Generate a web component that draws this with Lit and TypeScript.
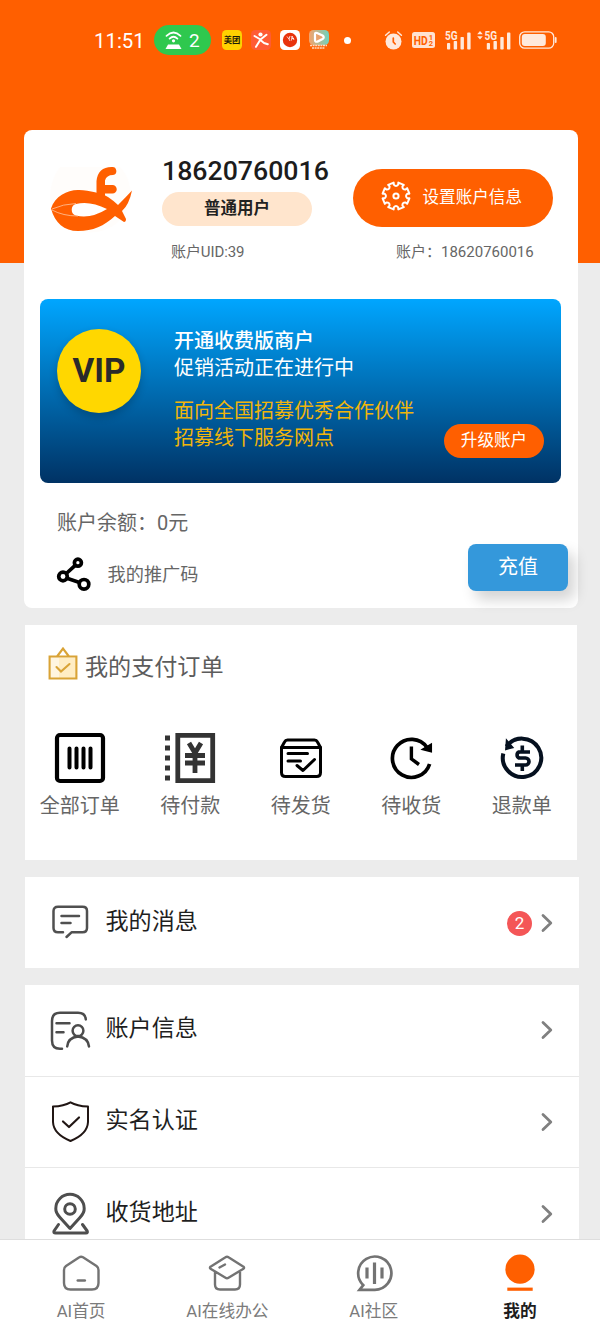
import { LitElement, html, css, svg } from "lit";
import { customElement, property } from "lit/decorators.js";

const baseFont = css`
  :host {
    font-family: Roboto, "Noto Sans CJK SC", sans-serif;
  }
  svg {
    display: block;
    flex: none;
    overflow: visible;
  }
`;

@customElement("status-bar")
class StatusBar extends LitElement {
  static styles = [
    baseFont,
    css`
      :host {
        display: flex;
        align-items: center;
        height: 80px;
        padding-left: 94px;
        box-sizing: border-box;
        color: #fff;
      }
      .time {
        width: 60px;
        font-size: 20.4px;
        line-height: 24px;
        padding-top: 1px;
        white-space: nowrap;
      }
      .hotspot {
        display: flex;
        align-items: center;
        gap: 7px;
        box-sizing: border-box;
        width: 57px;
        height: 30px;
        padding-left: 11px;
        border-radius: 15px;
        background: #2fc84e;
        font-size: 19px;
        margin-right: 11px;
      }
      .apps {
        display: flex;
        gap: 9px;
        align-items: center;
      }
      .dot {
        width: 7px;
        height: 7px;
        border-radius: 50%;
        background: #fff;
        margin: 0 34px 0 15px;
      }
      .system {
        display: flex;
        align-items: center;
      }
      .alarm { margin-right: 10px; }
      .hd { margin-right: 10px; }
      .sig { margin-right: 6px; }
      .sig2 { margin-right: 8px; }
    `,
  ];

  render() {
    const bars = (x: number) => svg`
      <rect x=${x} y="14" width="3.2" height="6.5" rx=".8"/>
      <rect x=${x + 6.7} y="12" width="3.4" height="8.5" rx=".8"/>
      <rect x=${x + 13.5} y="8" width="3.4" height="12.5" rx=".8"/>
      <rect x=${x + 20.2} y="3.6" width="3.4" height="16.9" rx=".8"/>`;
    return html`
      <span class="time">11:51</span>
      <span class="hotspot">
        <svg width="17" height="19" viewBox="0 0 17 19">
          <path d="M1.500 4.800Q8.500-1.800 15.500 4.800M4.600 7.600Q8.500 4 12.400 7.600" fill="none" stroke="#fff" stroke-width="1.8" stroke-linecap="round"/>
          <circle cx="8.500" cy="9.800" r="1.600" fill="#fff"/>
          <path d="M3 13.500H14L16.500 18H.5Z" fill="#fff"/>
        </svg>
        <span>2</span>
      </span>
      <span class="apps">
        <svg width="20" height="20" viewBox="0 0 20 20">
          <rect width="20" height="20" rx="4.500" fill="#ffd100"/>
          <text x="10" y="13.200" text-anchor="middle" font-size="8.300" font-weight="700" fill="#1d1a08">美团</text>
        </svg>
        <svg width="20" height="20" viewBox="0 0 20 20">
          <rect width="20" height="20" rx="4.500" fill="#ff5b35"/>
          <circle cx="9.500" cy="4.500" r="2.100" fill="#fff"/>
          <path d="M3.500 6 9.500 9.500 15.500 4.800M9.500 9.500 5 16.800M10 10.500 13 13 16.800 14.200" fill="none" stroke="#fff" stroke-width="2" stroke-linecap="round" stroke-linejoin="round"/>
        </svg>
        <svg width="20" height="20" viewBox="0 0 20 20">
          <rect width="20" height="20" rx="4.500" fill="#fff"/>
          <circle cx="10" cy="10" r="7.200" fill="#e8330c"/>
          <path d="M7 6.500 9 9M10 6 9 9M9 9 10 11M12 6 11.500 10.500M12 6 14 10M12 8.500H14" fill="none" stroke="#fff" stroke-width=".8"/>
        </svg>
        <svg width="20" height="20" viewBox="0 0 20 20">
          <defs>
            <linearGradient id="play" x1="0" x2="1"><stop stop-color="#f6a26a"/><stop offset="1" stop-color="#6fd3be"/></linearGradient>
          </defs>
          <rect width="20" height="15" rx="4.500" fill="url(#play)"/>
          <path d="M6 4.200Q6 2.200 8 3L13.500 5.500Q16 7.200 13.500 9L8.500 11.600Q6 12.300 6 10Z" fill="#e8a26c" stroke="#fff" stroke-width="2.200"/>
          <path d="M1 15.500H18M3 18H16" stroke="#ffd9c0" stroke-width="1.700" stroke-dasharray="2 .6"/>
        </svg>
      </span>
      <span class="dot"></span>
      <span class="system">
        <svg class="alarm" width="17" height="19" viewBox="0 0 17 19">
          <circle cx="8.500" cy="10.500" r="8" fill="#ffe9dc"/>
          <path d="M.6 4.200 4.300 1M16.400 4.200 12.700 1" stroke="#ffe9dc" stroke-width="1.500" stroke-linecap="round"/>
          <path d="M8.300 7V11L10.200 13" fill="none" stroke="#ff5f00" stroke-width="1.700" stroke-linecap="round"/>
        </svg>
        <svg class="hd" width="23" height="16" viewBox="0 0 23 16">
          <rect width="23" height="16" rx="2.500" fill="#ffe3d2"/>
          <text x="1.800" y="12.600" font-size="12.500" font-weight="700" fill="#ff5f00" textLength="14" lengthAdjust="spacingAndGlyphs">HD</text>
          <text x="16.800" y="7.500" font-size="7.600" font-weight="700" fill="#ff5f00">1</text>
          <text x="16.800" y="14.400" font-size="7.600" font-weight="700" fill="#ff5f00">2</text>
        </svg>
        <svg class="sig" width="26" height="22" viewBox="0 0 26 22" fill="#ffe9dc">
          <text x="0" y="11" font-size="12.300" font-weight="700" textLength="12.600" lengthAdjust="spacingAndGlyphs">5G</text>
          ${bars(2)}
        </svg>
        <svg class="sig2" width="34" height="22" viewBox="0 0 34 22" fill="#ffe9dc">
          <path d="M.2 5.200 3 2 5.800 5.200ZM.2 7.200H5.800L3 10.400Z"/>
          <text x="7.500" y="11" font-size="12.300" font-weight="700" textLength="12.600" lengthAdjust="spacingAndGlyphs">5G</text>
          ${bars(9.800)}
        </svg>
        <svg width="38" height="18" viewBox="0 0 38 18">
          <rect x=".7" y=".8" width="34" height="16.400" rx="5" fill="none" stroke="#ffe9dc" stroke-width="1.300"/>
          <rect x="2.800" y="3" width="24" height="12" rx="3" fill="#ffe9dc"/>
          <rect x="35.800" y="6" width="1.800" height="6" rx=".9" fill="#ffe9dc"/>
        </svg>
      </span>
    `;
  }
}

const GEAR = (() => {
  const at = (a: number, r: number) =>
    `${(15 + r * Math.cos(a)).toFixed(2)} ${(15 + r * Math.sin(a)).toFixed(2)}`;
  let d = "";
  const teeth = 8;
  for (let i = 0; i < teeth; i++) {
    const a = (i * 2 * Math.PI) / teeth + Math.PI / 8;
    d += `${i ? "L" : "M"}${at(a - 0.22, 13.600)}L${at(a + 0.22, 13.600)}L${at(a + 0.2, 11.500)}`;
    d += `Q${at(a + Math.PI / 8, 8.800)} ${at(a + Math.PI / 4 - 0.2, 11.500)}`;
  }
  return `${d}Z`;
})();

@customElement("account-card")
class AccountCard extends LitElement {
  static styles = [
    baseFont,
    css`
      :host {
        display: flex;
        flex-direction: column;
        box-sizing: border-box;
        height: 477px;
        border-radius: 8px;
        background: #fff;
        color: #666;
      }
      .profile {
        display: flex;
        height: 169px;
      }
      .logo { margin: 36px 0 0 26px; }
      .who {
        width: 191px;
        margin-left: 29px;
        padding-top: 25px;
        box-sizing: border-box;
      }
      .phone {
        font-size: 26.700px;
        line-height: 32px;
        font-weight: 500;
        color: #1c1c1c;
      }
      .level {
        width: 150px;
        height: 34px;
        margin-top: 5px;
        border-radius: 17px;
        background: #ffe5cd;
        color: #222;
        text-align: center;
        font-size: 16.500px;
        font-weight: 700;
        line-height: 34px;
      }
      .uid {
        margin: 15px 0 0 9px;
        font-size: 15px;
        line-height: 22px;
        letter-spacing: -0.1px;
      }
      .side { padding-top: 39px; }
      .setup {
        display: flex;
        align-items: center;
        box-sizing: border-box;
        width: 200px;
        height: 58px;
        padding: 0 0 4px 28px;
        gap: 11.500px;
        border-radius: 29px;
        background: #ff5f00;
        color: #fff;
        font-size: 16.600px;
      }
      .acct {
        margin: 14px 0 0 43px;
        font-size: 15px;
        line-height: 22px;
        white-space: nowrap;
      }
      .vip {
        display: flex;
        box-sizing: border-box;
        width: 521px;
        height: 184px;
        margin-left: 16px;
        border-radius: 8px;
        background: linear-gradient(#00a6ff, #003264);
      }
      .medal {
        width: 84px;
        height: 84px;
        margin: 30px 0 0 17px;
        border-radius: 50%;
        background: #ffd700;
        color: #2a2a2a;
        text-align: center;
        font-size: 33.300px;
        font-weight: 700;
        line-height: 84px;
        box-shadow: 0 4px 8px rgba(0, 0, 0, 0.2);
      }
      .promo {
        width: 270px;
        margin-left: 33px;
        padding-top: 29px;
        color: #fff;
        font-size: 20px;
        line-height: 26.500px;
      }
      .strong { font-weight: 500; }
      .partner {
        margin-top: 17px;
        color: #f1b50a;
      }
      .upgrade {
        width: 100px;
        height: 34px;
        margin-top: 125px;
        border-radius: 17px;
        background: #ff5f00;
        color: #fff;
        text-align: center;
        font-size: 16.600px;
        line-height: 34px;
      }
      .money {
        display: flex;
        justify-content: space-between;
        padding: 0 10px 0 33px;
      }
      .balance {
        margin-top: 25px;
        font-size: 20px;
        line-height: 30px;
      }
      .share {
        display: flex;
        align-items: center;
        gap: 17px;
        margin-top: 19px;
        font-size: 18.200px;
      }
      .share span { margin: -2px 0 0 -0.500px; }
      .recharge {
        width: 100px;
        height: 47px;
        margin-top: 61px;
        border-radius: 8px;
        background: #3498db;
        box-shadow: 7px 9px 14px rgba(0, 0, 0, 0.17);
        color: #fff;
        text-align: center;
        font-size: 20px;
        line-height: 47px;
      }
    `,
  ];

  render() {
    return html`
      <div class="profile">
        <svg class="logo" width="83" height="74" viewBox="0 0 83 74">
          <path d="M10 1H70Q81 12 81 32A41 41 0 0 1 0 32Q0 14 10 1Z" fill="#fffdfb"/>
          <path d="M1 42.500C5 30 18 23.500 29 24C40 24.500 51 27 58 31Q64 35 68 39Q76 31 82 24.500Q79 39 72 45L76 53Q76 56 74 56L65 50C54 60 43 65 28 65C14 65 5 57 1 42.500Z" fill="#ff5f00"/>
          <path d="M46.500 28V15Q48 1 61.500 1A4 4 0 0 1 63 9Q56.500 9 55 14.500V19H62.500A4 4 0 0 1 62.500 27.500H55V31Z" fill="#ff5f00"/>
          <path d="M26 38Q40 34.500 57 43Q41 53 26 49.500A6 6 0 0 1 26 38Z" fill="#fff"/>
          <path d="M2 43Q13 38 26 37.500M2 44Q13 50 28 50" fill="none" stroke="#ffd2b5" stroke-width=".7"/>
        </svg>
        <div class="who">
          <div class="phone">18620760016</div>
          <div class="level">普通用户</div>
          <div class="uid">账户UID:39</div>
        </div>
        <div class="side">
          <div class="setup">
            <svg width="30" height="30" viewBox="0 0 30 30" fill="none" stroke="#fff" stroke-width="2" stroke-linejoin="round">
              <path d=${GEAR}/>
              <circle cx="15" cy="15" r="2.600"/>
            </svg>
            <span>设置账户信息</span>
          </div>
          <div class="acct">账户：18620760016</div>
        </div>
      </div>
      <div class="vip">
        <div class="medal">VIP</div>
        <div class="promo">
          <div class="strong">开通收费版商户</div>
          <div>促销活动正在进行中</div>
          <div class="partner">面向全国招募优秀合作伙伴<br />招募线下服务网点</div>
        </div>
        <div class="upgrade">升级账户</div>
      </div>
      <div class="money">
        <div>
          <div class="balance">账户余额：0元</div>
          <div class="share">
            <svg width="34" height="34" viewBox="0 0 34 34" fill="none" stroke="#000" stroke-width="3.700">
              <circle cx="6" cy="19.500" r="4.300"/>
              <circle cx="20.900" cy="5.700" r="3.500"/>
              <circle cx="27" cy="27.300" r="4.800"/>
              <path d="M9.300 16.500 18.200 8.300M10 21.300 22.500 25.500"/>
            </svg>
            <span>我的推广码</span>
          </div>
        </div>
        <div class="recharge">充值</div>
      </div>
    `;
  }
}

const orderItems = [
  {
    label: "全部订单",
    icon: svg`<rect x="2" y="2" width="46" height="46" rx="3" fill="none" stroke="#000" stroke-width="4.200"/>
      <path d="M14.500 15.500V34.500M21.500 15.500V34.500M28.500 15.500V34.500M35.500 15.500V34.500" stroke="#000" stroke-width="4" stroke-linecap="round"/>`,
  },
  {
    label: "待付款",
    icon: svg`<path d="M12.800 2.300H47.700V47.700H12.800Z" fill="none" stroke="#333" stroke-width="4.800"/>
      <path d="M0 2.500H5V7.500H0ZM0 12.500H5V17.500H0ZM0 22.500H5V27.500H0ZM0 32.500H5V37.500H0ZM0 42.500H5V47.500H0Z" fill="#333"/>
      <path d="M24 10 30 20 36 10M20 22.500H40M20 30H40M30 20V40" fill="none" stroke="#333" stroke-width="4.800"/>`,
  },
  {
    label: "待发货",
    icon: svg`<path d="M5.500 14.500V39.500Q5.500 43.500 9.500 43.500H40.500Q44.500 43.500 44.500 39.500V14.500L41.500 9Q40.500 7 38.500 7H11.500Q9.500 7 8.500 9Z" fill="none" stroke="#000" stroke-width="3" stroke-linejoin="round"/>
      <path d="M5.500 14.500H44.500M12 20.500H31.500M12 28H24.500M21 32.500 27 37.500 38.500 26.500" fill="none" stroke="#000" stroke-width="3" stroke-linecap="round" stroke-linejoin="round"/>`,
  },
  {
    label: "待收货",
    icon: svg`<path d="M41 14.500A19 19 0 1 0 43.600 31" fill="none" stroke="#000" stroke-width="3.700"/>
      <path d="M36.300 16.500 45.300 11V18.800Z" stroke="#000" stroke-width="1.500"/>
      <path d="M25.400 13.500V26L33 31.500" fill="none" stroke="#000" stroke-width="3.400"/>`,
  },
  {
    label: "退款单",
    icon: svg`<path d="M9.500 13.500A19.200 19.200 0 1 1 6.300 20.500" fill="none" stroke="#05101f" stroke-width="4"/>
      <path d="M9.500 7 8.800 16.500 16 14.500Z" fill="#05101f" stroke="#05101f" stroke-width="1.400"/>
      <path d="M33 19H22A3.300 3.300 0 0 0 22 25H28.500A3.500 3.500 0 0 1 28.500 32H18M25.300 12.500V18M25.300 33V38" fill="none" stroke="#05101f" stroke-width="3.600"/>`,
  },
];

@customElement("order-panel")
class OrderPanel extends LitElement {
  static styles = [
    baseFont,
    css`
      :host {
        display: block;
        box-sizing: border-box;
        height: 235px;
        background: #fff;
        color: #5c5c5c;
      }
      .title {
        display: flex;
        align-items: flex-start;
        gap: 7px;
        height: 63px;
        box-sizing: border-box;
        padding: 21px 0 0 23px;
        font-size: 23.100px;
        line-height: 34px;
      }
      .title span { padding-top: 5px; }
      .row {
        display: grid;
        grid-template-columns: repeat(5, 1fr);
        margin-top: 45px;
        margin-left: -0.500px;
      }
      .item {
        display: flex;
        flex-direction: column;
        align-items: center;
        gap: 8px;
        font-size: 20px;
        line-height: 30px;
        color: #666;
      }
    `,
  ];

  render() {
    return html`
      <div class="title">
        <svg width="30" height="34" viewBox="0 0 30 34">
          <path d="M2 11.500H28V32.500H2Z" fill="#ffedc4"/>
          <path d="M2 11.500H11V32.500H2Z" fill="#fff5e0"/>
          <path d="M1.600 10.500H28.400V32.500H1.600ZM9 10.500 15 2.500 21 10.500" fill="none" stroke="#d9a336" stroke-width="2.100"/>
          <path d="M8.500 21 13 25.500 21.500 18" fill="none" stroke="#d9a336" stroke-width="2.100" stroke-linecap="round"/>
        </svg>
        <span>我的支付订单</span>
      </div>
      <div class="row">
        ${orderItems.map(
          (o) => html`<div class="item">
            <svg width="50" height="50" viewBox="0 0 50 50">${o.icon}</svg>
            <span>${o.label}</span>
          </div>`
        )}
      </div>
    `;
  }
}

const menuIcons: Record<string, unknown> = {
  message: svg`<path d="M13 31.300H8Q3.500 31.300 3.500 27V10Q3.500 5.800 8 5.800H32.500Q37 5.800 37 10V27Q37 31.300 32.500 31.300H21.500L16.500 36M11.500 15H29M11.500 22H20.500" stroke="#505050"/>`,
  account: svg`<path d="M12 39.800H10Q2 39.800 2 31.500V12Q2 3.800 10 3.800H28Q35.300 3.800 35.800 10.500M6.500 14.300H19.500M6.500 23.200H13.500M17.200 37.500Q18 28.500 28 27.500Q38 28.500 39 37.500" stroke="#4c4c4c"/><circle cx="28" cy="21.700" r="5.400" stroke="#4c4c4c"/>`,
  shield: svg`<path d="M20.500 2.300Q27 6 38 6.600V22Q37.500 34 20.500 41Q3.500 34 3 22V6.600Q14 6 20.500 2.300Z" stroke="#211614" stroke-width="2"/><path d="M13 21.500 19 27 29 17.500" stroke="#211614" stroke-width="2.200"/>`,
  place: svg`<path d="M20 36.500 10 25.500Q5.500 20.500 5.800 16.500A14.200 14.200 0 0 1 34.200 16.500Q34.500 20.500 30 25.500ZM8.500 32.500 4 39Q3.300 41 5.500 41H36Q38 41 37.200 39L32.500 32.500" stroke="#4e4e4e" stroke-width="3"/><circle cx="20" cy="17" r="5.300" stroke="#4e4e4e" stroke-width="3"/>`,
};

@customElement("menu-row")
class MenuRow extends LitElement {
  @property() icon = "";
  @property() label = "";
  @property() count = "";

  static styles = [
    baseFont,
    css`
      :host {
        display: flex;
        align-items: center;
        box-sizing: border-box;
        height: 91px;
        padding: 0 26px 0 25px;
        background: #fff;
      }
      .label {
        flex: 1;
        margin-left: 14.500px;
        padding-bottom: 2px;
        font-size: 23.100px;
        line-height: 34px;
        color: #1f1f1f;
      }
      .count {
        width: 25px;
        height: 25px;
        margin: 2px 9px 0 0;
        border-radius: 50%;
        background: #f45657;
        color: #fff;
        text-align: center;
        font-size: 17px;
        line-height: 25px;
      }
    `,
  ];

  render() {
    return html`
      <svg width="41" height="43" viewBox="0 0 41 43" fill="none" stroke-width="2.500" stroke-linecap="round" stroke-linejoin="round">
        ${menuIcons[this.icon]}
      </svg>
      <span class="label">${this.label}</span>
      ${this.count ? html`<span class="count">${this.count}</span>` : ""}
      <svg class="arrow" width="12" height="18" viewBox="0 0 12 18">
        <path d="M2 1.500 9.800 9 2 16.500" fill="none" stroke="#808080" stroke-width="2.800" stroke-linecap="round" stroke-linejoin="round"/>
      </svg>
    `;
  }
}

@customElement("tab-bar")
class TabBar extends LitElement {
  static styles = [
    baseFont,
    css`
      :host {
        display: grid;
        grid-template-columns: repeat(4, 146.300px);
        box-sizing: border-box;
        height: 94px;
        padding: 15px 0 0 8px;
        border-top: 1px solid #dedede;
        background: #fff;
        z-index: 1;
      }
      .tab {
        display: flex;
        flex-direction: column;
        align-items: center;
        gap: 6px;
        font-size: 16.700px;
        line-height: 26px;
        color: #7b7b7b;
      }
      .on {
        color: #1d1d1d;
        font-weight: 700;
      }
    `,
  ];

  render() {
    const tab = (label: string, icon: unknown, on = false) => html`
      <div class="tab ${on ? "on" : ""}">
        <svg width="38" height="38" viewBox="0 0 38 38" fill="none" stroke="#737373" stroke-width="2.400" stroke-linecap="round" stroke-linejoin="round">
          ${icon}
        </svg>
        <span>${label}</span>
      </div>
    `;
    return html`
      ${tab("AI首页", svg`<path d="M17.300 2.300 4 11Q2 12.500 2 15V28Q2 34.500 8.500 34.500H30Q36.500 34.500 36.500 28V15Q36.500 12.500 34.500 11L21 2.300Q19 1.100 17.300 2.300Z"/><path d="M15.800 25.500H22.800" stroke-width="2.600"/>`)}
      ${tab("AI在线办公", svg`<path d="M17.500 2.200 2.500 11.700Q1.500 12.700 2.500 13.700L17.500 22.700Q19 23.700 20.500 22.700L35.500 13.700Q36.500 12.700 35.500 11.700L20.500 2.200Q19 1.200 17.500 2.200ZM7 17V29.500Q7 34.500 12 34.500H27Q32 34.500 32 29.500V17M11.500 12.500 17 9.500"/>`)}
      ${tab("AI社区", svg`<path d="M19.500 34.800H4.500L8.300 30.200A16.600 16.600 0 1 1 19.500 34.800Z" stroke-width="2.700" stroke-linejoin="miter"/><path d="M12 12.500V23.500M19.500 7.500V29M27 12.500V23.500" stroke-width="3.200" stroke-linecap="butt"/>`)}
      ${tab("我的", svg`<circle cx="19" cy="14.200" r="14.600" fill="#ff5f00" stroke="none"/><path d="M6.300 34.200H31.700" stroke="#ff5f00" stroke-width="3.200" stroke-linecap="butt"/>`, true)}
    `;
  }
}

@customElement("app-root")
class AppRoot extends LitElement {
  static styles = [
    baseFont,
    css`
      :host {
        display: flex;
        flex-direction: column;
        width: 600px;
        height: 1333px;
        overflow: hidden;
        background: linear-gradient(#ff5f00 263px, #ececec 263px);
      }
      .page {
        flex: 1;
        min-height: 0;
        overflow: hidden;
        padding: 50px 21px 0 24px;
      }
      .card { margin-right: 1px; height: 477.500px; }
      .orders { margin: 17.500px 2px 0 1px; }
      .group { margin: 17px 0 0 1px; }
      .line { border-bottom: 1px solid #e8e8e8; height: 91.500px; }
    `,
  ];

  render() {
    return html`
      <status-bar></status-bar>
      <div class="page">
        <account-card class="card"></account-card>
        <order-panel class="orders"></order-panel>
        <div class="group">
          <menu-row icon="message" label="我的消息" count="2"></menu-row>
        </div>
        <div class="group">
          <menu-row class="line" icon="account" label="账户信息"></menu-row>
          <menu-row class="line" icon="shield" label="实名认证"></menu-row>
          <menu-row icon="place" label="收货地址"></menu-row>
        </div>
      </div>
      <tab-bar></tab-bar>
    `;
  }
}
